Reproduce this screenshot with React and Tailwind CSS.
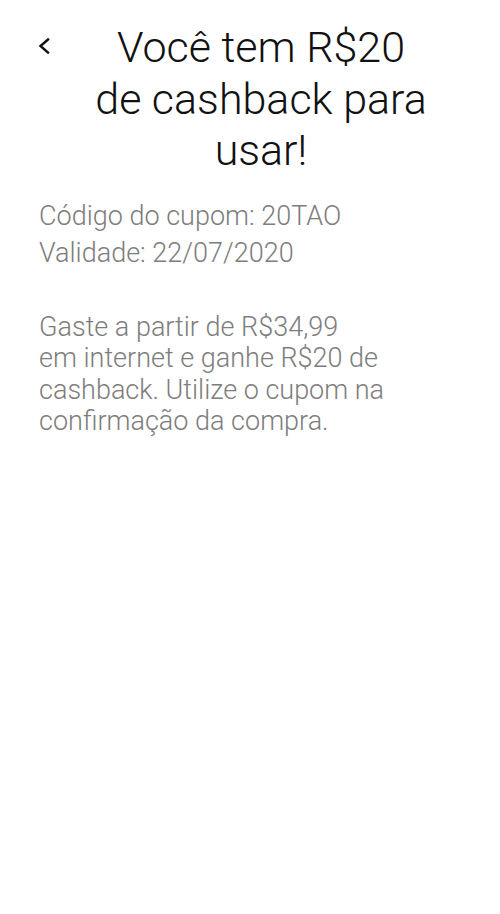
export default function App() {
  return (
    <div className="w-[500px] h-[914px] bg-white" style={{ fontFamily: "Roboto, 'Liberation Sans', sans-serif" }}>
      <div className="flex items-start pt-[22px]">
        <button className="ml-[36px] mt-[15px] w-[16px] h-[18px] flex items-center justify-center">
          <svg width="16" height="18" viewBox="0 0 16 18" fill="none">
            <path d="M12 2.5 L4.5 9 L12 15.5" stroke="#111" strokeWidth="2.4" strokeLinecap="square" strokeLinejoin="miter" />
          </svg>
        </button>
        <h1 className="ml-[39px] w-[340px] text-center text-[43px] leading-[51.5px] font-light text-[#111] whitespace-nowrap">
          Você tem R$20
          <br />
          de cashback para
          <br />
          usar!
        </h1>
      </div>
      <div className="px-[39px] pt-[21px] text-[27px] font-light text-[#7d7d7d] whitespace-nowrap">
        <p className="leading-[37px]">
          Código do cupom: 20TAO
          <br />
          Validade: 22/07/2020
        </p>
        <p className="mt-[40px] leading-[31.5px]">
          Gaste a partir de R$34,99
          <br />
          em internet e ganhe R$20 de
          <br />
          cashback. Utilize o cupom na
          <br />
          confirmação da compra.
        </p>
      </div>
    </div>
  );
}
